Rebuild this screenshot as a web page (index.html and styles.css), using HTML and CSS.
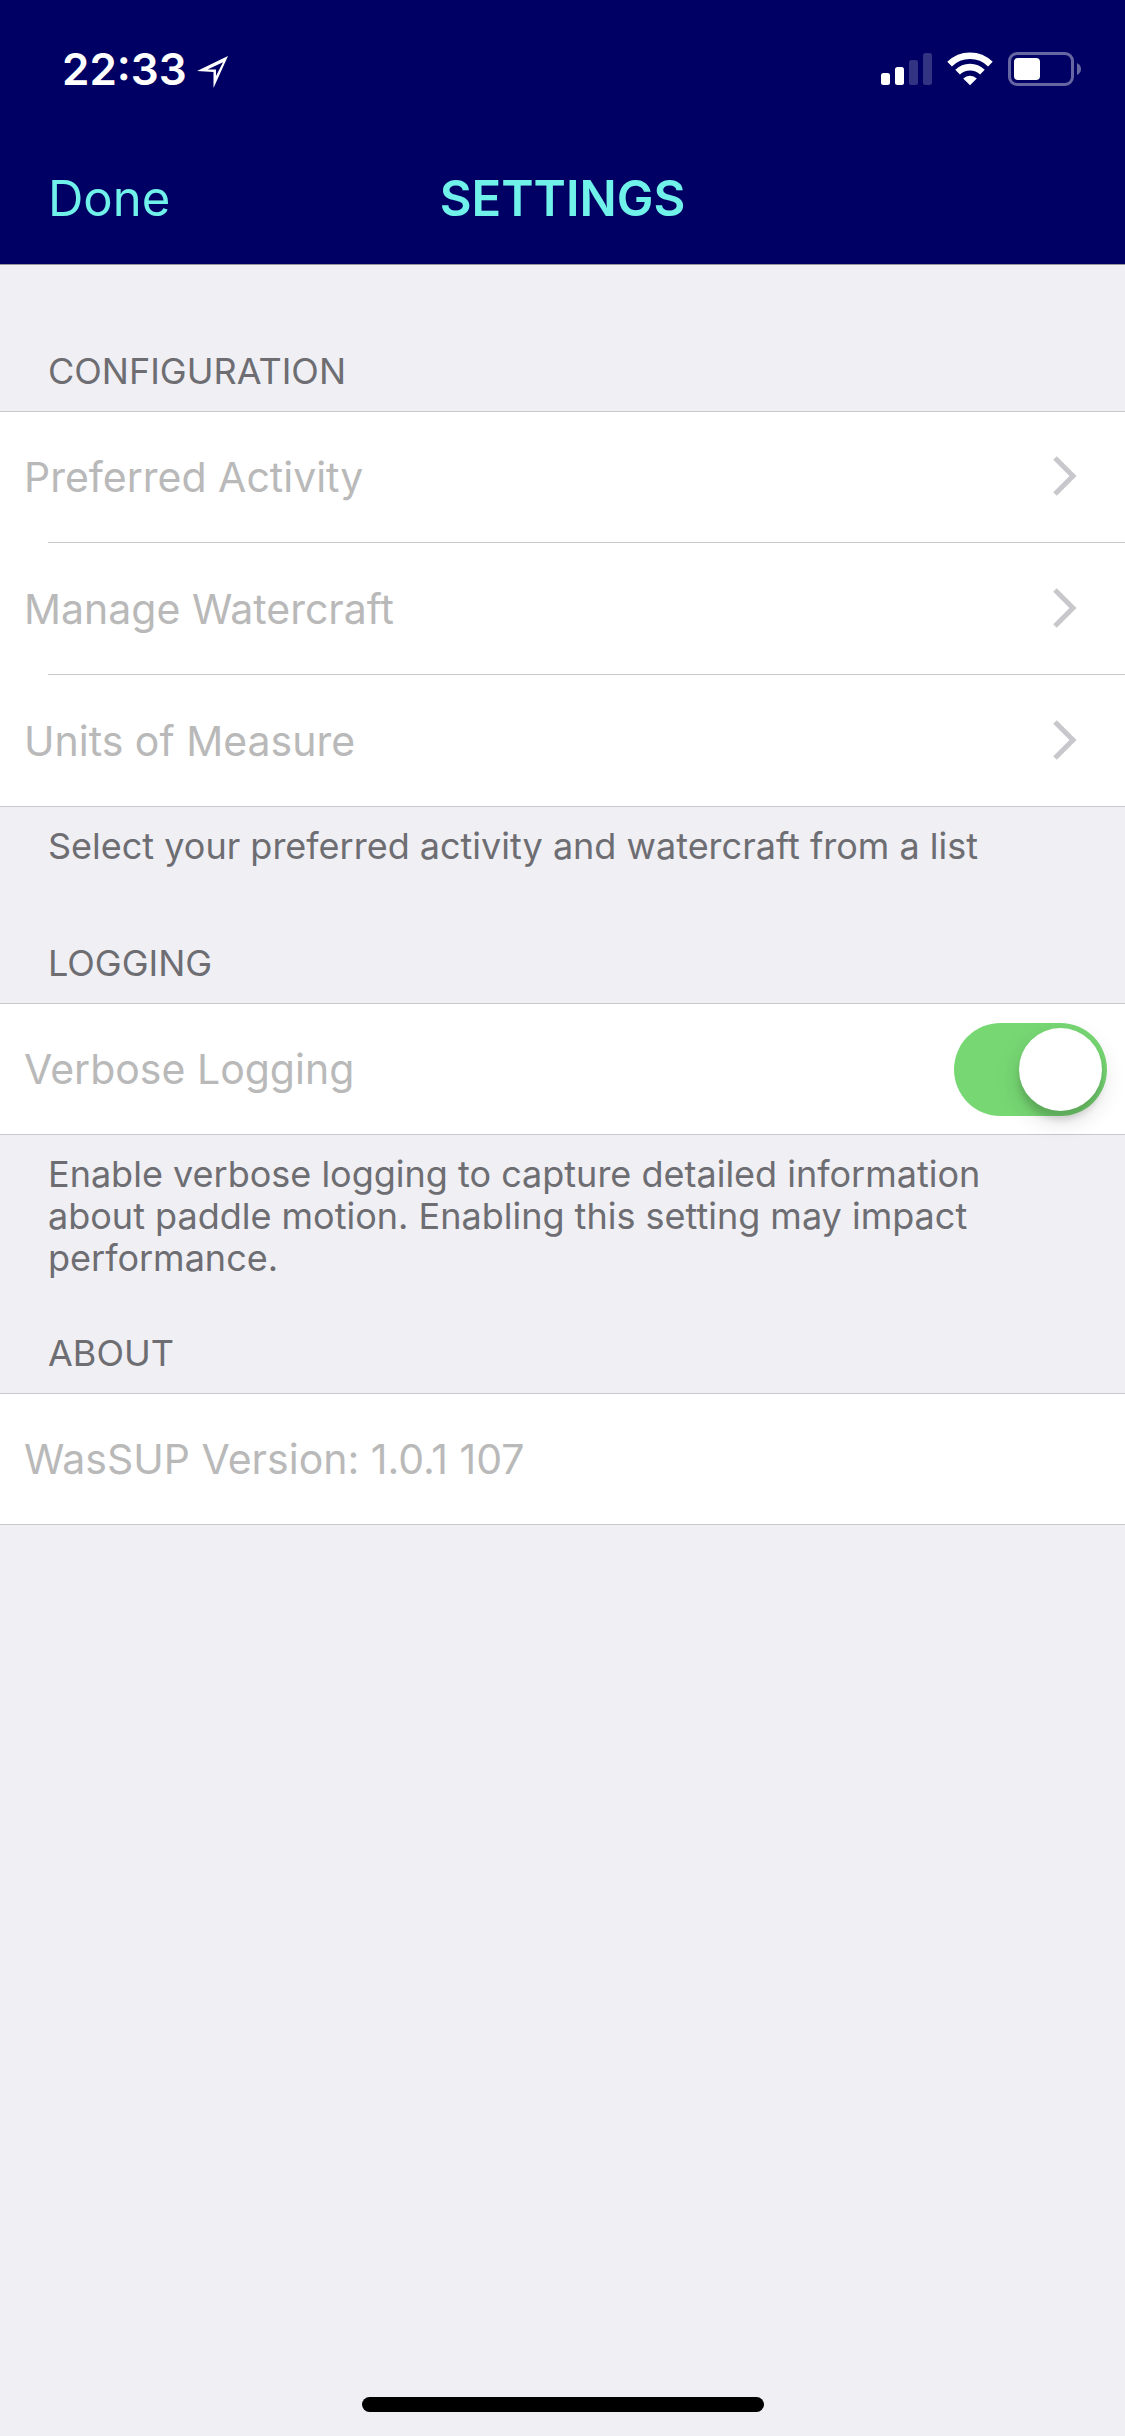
FILE: index.html
```html
<!DOCTYPE html>
<html lang="en">
<head>
	<meta charset="UTF-8" />
	<meta name="viewport" content="width=device-width, initial-scale=1.0" />
	<title>Settings</title>
	<link rel="stylesheet" href="styles.css">
</head>
<body>
	<header class="top">
		<div class="status">
			<span class="time">22:33</span>
			<svg class="location" width="32" height="32" viewBox="0 0 32 32">
				<path d="M0 15 L31 0 L16.500 32 V16 Z M10.500 13.500 H19 V20 L26 6.200 Z" fill="#fff" fill-rule="evenodd"/>
			</svg>
			<div class="icons">
				<svg class="signal" width="51" height="32" viewBox="0 0 51 32" fill="#fff">
					<rect x="0" y="20" width="9" height="12" rx="2.500"/>
					<rect x="14" y="14" width="9" height="18" rx="2.500"/>
					<rect x="28" y="7" width="9" height="25" rx="2.500" opacity="0.2"/>
					<rect x="42" y="0" width="9" height="32" rx="2.500" opacity="0.2"/>
				</svg>
				<svg class="wifi" width="46" height="34" viewBox="0 0 46 34">
					<g fill="none" stroke="#fff" stroke-width="6.600">
						<path d="M2.600 12.200 A29 29 0 0 1 43.400 12.200"/>
						<path d="M10.600 20.200 A17.600 17.600 0 0 1 35.400 20.200"/>
					</g>
					<path d="M23 33.300 L16.200 26.500 A9.700 9.700 0 0 1 29.800 26.500 Z" fill="#fff"/>
				</svg>
				<svg class="battery" width="73" height="34" viewBox="0 0 73 34">
					<rect x="1.500" y="1.500" width="63" height="31" rx="7.500" fill="none" stroke="#fff" stroke-width="3" opacity="0.4"/>
					<rect x="6" y="6" width="26" height="22" rx="4" fill="#fff"/>
					<path d="M69 11 Q73 13 73 17 T69 23 Z" fill="#fff" opacity="0.4"/>
				</svg>
			</div>
		</div>
		<nav class="bar">
			<button type="button" class="done">Done</button>
			<h1>SETTINGS</h1>
		</nav>
	</header>

	<main>
		<section class="group">
			<h2>CONFIGURATION</h2>
			<ul class="list">
				<li><a href="#activity">Preferred Activity
					<svg class="arrow" width="24" height="40" viewBox="0 0 24 40"><path d="M2 2 L20 20 L2 38"/></svg>
				</a></li>
				<li><a href="#watercraft">Manage Watercraft
					<svg class="arrow" width="24" height="40" viewBox="0 0 24 40"><path d="M2 2 L20 20 L2 38"/></svg>
				</a></li>
				<li><a href="#units">Units of Measure
					<svg class="arrow" width="24" height="40" viewBox="0 0 24 40"><path d="M2 2 L20 20 L2 38"/></svg>
				</a></li>
			</ul>
			<p class="note">Select your preferred activity and watercraft from a list</p>
		</section>

		<section class="group">
			<h2>LOGGING</h2>
			<ul class="list">
				<li class="cell">
					<label for="verbose">Verbose Logging</label>
					<input type="checkbox" id="verbose" class="switch" checked>
				</li>
			</ul>
			<p class="note">Enable verbose logging to capture detailed information about paddle motion. Enabling this setting may impact performance.</p>
		</section>

		<section class="group">
			<h2>ABOUT</h2>
			<ul class="list">
				<li class="cell">WasSUP Version: 1.0.1 107</li>
			</ul>
		</section>
	</main>

	<div class="home"></div>
</body>
</html>
```
FILE: styles.css
```css
*{margin: 0;padding: 0;box-sizing: border-box;}
body{
	display: flex;flex-direction: column;min-height: 100vh;
	background: #efeff4;color: #6d6d72;
	font-family: Inter, "Liberation Sans", sans-serif;
}
.top{background: #000064;color: #70f2ea;border-bottom: 1px solid #96969c;}

/* status bar */
.status{
	display: flex;align-items: center;height: 132px;
	padding: 6px 44px 0 62px;color: #fff;
}
.time{font-size: 44px;font-weight: 600;}
.location{margin-left: 10px;margin-top: 6px;}
.icons{display: flex;align-items: center;margin-left: auto;}
.wifi{margin-left: 15px;}
.battery{margin-left: 15px;}

.bar{
	display: grid;grid-template-columns: 1fr auto 1fr;
	align-items: center;height: 132px;padding: 0 48px;
}
.done{
	justify-self: start;border: 0;background: none;
	font: inherit;font-size: 49px;color: inherit;cursor: pointer;
}
.bar h1{font-size: 49px;font-weight: 600;}

/* groups */
main{flex: 1;padding-top: 32px;}
.group{padding-top: 53px;}
.group h2{
	padding: 0 48px;margin-bottom: 19px;
	font-size: 36px;line-height: 42px;font-weight: 400;
}
.list{
	list-style: none;background: #fff;color: #b9b9b9;
	border-top: 1px solid #c8c7cc;border-bottom: 1px solid #c8c7cc;
	font-size: 41px;
}
.list a,.cell{
	display: flex;align-items: center;justify-content: space-between;
	height: 130px;padding: 0 48px 0 24px;
	color: inherit;text-decoration: none;
}
.list li+li::before{
	content: "";display: block;height: 1px;
	margin-left: 48px;background: #c8c7cc;
}
.list li+li a{height: 131px;}
.list .cell{padding-right: 18px;}
.arrow{margin-bottom: 2px;}
.arrow path{fill: none;stroke: #c7c7cc;stroke-width: 5;}
.note{
	min-height: 82px;padding: 18px 140px 0 48px;
	font-size: 36px;line-height: 42px;
}

.switch{
	appearance: none;display: flex;align-items: center;justify-content: flex-end;
	width: 153px;height: 93px;padding: 5px;
	border-radius: 47px;background: #77d873;cursor: pointer;
}
.switch::before{
	content: "";width: 83px;height: 83px;
	border-radius: 50%;background: #fff;
	box-shadow: 0 9px 24px rgba(0,0,0,.15), 0 9px 6px rgba(0,0,0,.12);
}
.switch:not(:checked){justify-content: flex-start;background: #ddd;}

.home{
	width: 402px;height: 15px;margin: 0 auto 24px;
	border-radius: 8px;background: #000;
}
```
